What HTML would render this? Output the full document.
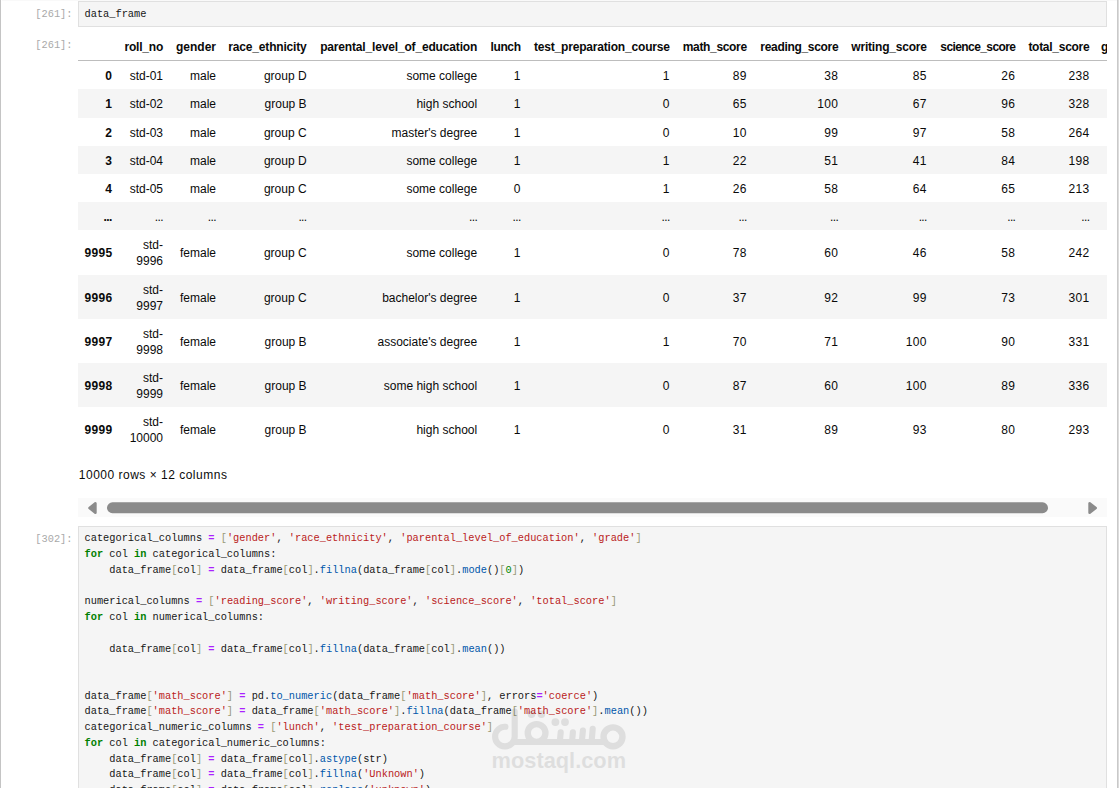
<!DOCTYPE html>
<html><head><meta charset="utf-8"><title>notebook</title>
<style>
html,body{margin:0;padding:0;background:#fff;}
body{width:1119px;height:788px;overflow:hidden;position:relative;font-family:"Liberation Sans",sans-serif;}
.edge-l{position:absolute;left:0;top:0;width:1px;height:788px;background:#c4c4c4;}
.edge-r{position:absolute;left:1117px;top:0;width:2px;height:788px;background:linear-gradient(to right,#c9c9c9 0,#c9c9c9 50%,#dcdcdc 50%,#dcdcdc 100%);}
.edge-t{position:absolute;left:2px;top:0;width:1115px;height:1px;background:#f9f9f9;}
.prompt{position:absolute;left:20px;width:52.5px;text-align:right;font-family:"Liberation Mono",monospace;font-size:10.32px;line-height:15.73px;color:#a9a9a9;white-space:pre;}
.inbox{position:absolute;left:78px;width:1029px;box-sizing:border-box;border:1px solid #e0e0e0;background:#f5f5f5;overflow:hidden;}
.code{position:absolute;left:5.5px;margin:0;font-family:"Liberation Mono",monospace;font-size:10.32px;line-height:15.73px;color:#161616;white-space:pre;}
.code b{font-weight:bold;}
.k{color:#008000;}
.o{color:#aa22ff;}
.s{color:#ba2121;}
.p{color:#0055aa;}
.b{color:#999977;}
.m{color:#008800;}
.out{position:absolute;left:78px;top:32px;width:1029px;height:430px;overflow:hidden;}
table.df{border-collapse:separate;border-spacing:0;table-layout:fixed;width:1078px;font-size:12px;color:#0a0a0a;}
table.df th,table.df td{padding:7.9px 6.5px 4.2px 6.5px;line-height:15.9px;text-align:right;vertical-align:middle;white-space:nowrap;overflow:visible;}
table.df th{font-weight:bold;}
table.df thead th{padding-top:7.9px;padding-bottom:4.2px;border-bottom:1px solid #bdbdbd;}
table.df tbody tr:nth-child(even) td,table.df tbody tr:nth-child(even) th{background:#f5f5f5;}
table.df tbody tr:nth-child(2) td,table.df tbody tr:nth-child(2) th{padding-bottom:5.2px;}
table.df tbody tr.t td,table.df tbody tr.t th{padding-top:8.4px;padding-bottom:3.8px;}
table.df tbody tr:nth-child(7) td,table.df tbody tr:nth-child(7) th{padding-top:7.9px;padding-bottom:5.3px;}
table.df td.n{letter-spacing:0.33px;}
.summary{position:absolute;left:78.8px;top:467px;font-size:12px;line-height:16px;letter-spacing:0.5px;color:#0a0a0a;white-space:nowrap;}
.sb{position:absolute;left:78px;top:498px;width:1029px;height:19px;background:#fafafa;}
.thumb{position:absolute;left:29px;top:3.9px;width:941px;height:11px;border-radius:5.5px;background:#8b8b8b;}
.al{position:absolute;left:10px;top:3.5px;width:0;height:0;border-top:6px solid transparent;border-bottom:6px solid transparent;border-right:9px solid #8b8b8b;}
.ar{position:absolute;left:1010px;top:3.5px;width:0;height:0;border-top:6px solid transparent;border-bottom:6px solid transparent;border-left:9px solid #8b8b8b;}

table.df thead th:last-child{text-align:left;}
.wmtext{position:absolute;left:412.6px;top:221.6px;font-family:"Liberation Sans",sans-serif;font-weight:bold;font-size:21.8px;line-height:24px;color:#000;opacity:0.092;white-space:nowrap;}

table.df tbody th{letter-spacing:0.3px;padding-right:6.9px;}

table.df thead th span{display:inline-block;margin-left:-30px;}
table.df thead th:last-child span{margin-left:-1.5px;}
table.df td.d{letter-spacing:-0.6px;}
table.df tbody tr:nth-child(6) th{letter-spacing:-0.6px;padding-right:7.4px;}

</style></head>
<body>
<div class="edge-l"></div><div class="edge-r"></div><div class="edge-t"></div>
<div class="prompt" style="top:6.8px">[261]:</div>
<div class="inbox" style="top:1px;height:26px"><pre class="code" style="top:4.7px">data_frame</pre></div>
<div class="prompt" style="top:37.9px">[261]:</div>
<div class="out"><table class="df"><colgroup><col style="width:41px"><col style="width:50.5px"><col style="width:53px"><col style="width:90.5px"><col style="width:170.5px"><col style="width:43.5px"><col style="width:149px"><col style="width:77px"><col style="width:91.5px"><col style="width:88.5px"><col style="width:88.5px"><col style="width:74px"><col style="width:60px"></colgroup><thead><tr><th style="letter-spacing:0px"><span></span></th><th style="letter-spacing:-0.215px"><span>roll_no</span></th><th style="letter-spacing:0px"><span>gender</span></th><th style="letter-spacing:-0.176px"><span>race_ethnicity</span></th><th style="letter-spacing:-0.163px"><span>parental_level_of_education</span></th><th style="letter-spacing:-0.35px"><span>lunch</span></th><th style="letter-spacing:-0.187px"><span>test_preparation_course</span></th><th style="letter-spacing:-0.337px"><span>math_score</span></th><th style="letter-spacing:-0.311px"><span>reading_score</span></th><th style="letter-spacing:-0.194px"><span>writing_score</span></th><th style="letter-spacing:-0.595px"><span>science_score</span></th><th style="letter-spacing:-0.275px"><span>total_score</span></th><th style="letter-spacing:-0.1px"><span>grade</span></th></tr></thead><tbody><tr class=""><th>0</th><td class="r">std-01</td><td class="">male</td><td class="">group D</td><td class="">some college</td><td class="n">1</td><td class="n">1</td><td class="n">89</td><td class="n">38</td><td class="n">85</td><td class="n">26</td><td class="n">238</td><td></td></tr><tr class=""><th>1</th><td class="r">std-02</td><td class="">male</td><td class="">group B</td><td class="">high school</td><td class="n">1</td><td class="n">0</td><td class="n">65</td><td class="n">100</td><td class="n">67</td><td class="n">96</td><td class="n">328</td><td></td></tr><tr class=""><th>2</th><td class="r">std-03</td><td class="">male</td><td class="">group C</td><td class="">master's degree</td><td class="n">1</td><td class="n">0</td><td class="n">10</td><td class="n">99</td><td class="n">97</td><td class="n">58</td><td class="n">264</td><td></td></tr><tr class=""><th>3</th><td class="r">std-04</td><td class="">male</td><td class="">group D</td><td class="">some college</td><td class="n">1</td><td class="n">1</td><td class="n">22</td><td class="n">51</td><td class="n">41</td><td class="n">84</td><td class="n">198</td><td></td></tr><tr class=""><th>4</th><td class="r">std-05</td><td class="">male</td><td class="">group C</td><td class="">some college</td><td class="n">0</td><td class="n">1</td><td class="n">26</td><td class="n">58</td><td class="n">64</td><td class="n">65</td><td class="n">213</td><td></td></tr><tr class=""><th>...</th><td class="d">...</td><td class="d">...</td><td class="d">...</td><td class="d">...</td><td class="d">...</td><td class="d">...</td><td class="d">...</td><td class="d">...</td><td class="d">...</td><td class="d">...</td><td class="d">...</td><td></td></tr><tr class="t"><th>9995</th><td class="r">std-<br>9996</td><td class="">female</td><td class="">group C</td><td class="">some college</td><td class="n">1</td><td class="n">0</td><td class="n">78</td><td class="n">60</td><td class="n">46</td><td class="n">58</td><td class="n">242</td><td></td></tr><tr class="t"><th>9996</th><td class="r">std-<br>9997</td><td class="">female</td><td class="">group C</td><td class="">bachelor's degree</td><td class="n">1</td><td class="n">0</td><td class="n">37</td><td class="n">92</td><td class="n">99</td><td class="n">73</td><td class="n">301</td><td></td></tr><tr class="t"><th>9997</th><td class="r">std-<br>9998</td><td class="">female</td><td class="">group B</td><td class="">associate's degree</td><td class="n">1</td><td class="n">1</td><td class="n">70</td><td class="n">71</td><td class="n">100</td><td class="n">90</td><td class="n">331</td><td></td></tr><tr class="t"><th>9998</th><td class="r">std-<br>9999</td><td class="">female</td><td class="">group B</td><td class="">some high school</td><td class="n">1</td><td class="n">0</td><td class="n">87</td><td class="n">60</td><td class="n">100</td><td class="n">89</td><td class="n">336</td><td></td></tr><tr class="t"><th>9999</th><td class="r">std-<br>10000</td><td class="">female</td><td class="">group B</td><td class="">high school</td><td class="n">1</td><td class="n">0</td><td class="n">31</td><td class="n">89</td><td class="n">93</td><td class="n">80</td><td class="n">293</td><td></td></tr></tbody></table></div>
<div class="summary">10000 rows × 12 columns</div>
<div class="sb"><svg style="position:absolute;left:0;top:0" width="1029" height="19" viewBox="78 498 1029 19"><g fill="#8b8b8b" stroke="#8b8b8b" stroke-width="2.6" stroke-linejoin="round"><path d="M89.5 508 L95.4 503.3 V512.7 Z"/><path d="M1095.7 508 L1089.6 503.3 V512.7 Z"/></g><rect x="107" y="502.3" width="941" height="10.9" rx="5.45" fill="#8b8b8b"/></svg></div>
<div class="prompt" style="top:531.6px">[302]:</div>
<div class="inbox" style="top:526px;height:300px"><pre class="code" style="top:4.4px">categorical_columns <b class="o">=</b> <span class="b">[</span><span class="s">'gender'</span>, <span class="s">'race_ethnicity'</span>, <span class="s">'parental_level_of_education'</span>, <span class="s">'grade'</span><span class="b">]</span>
<b class="k">for</b> col <b class="k">in</b> categorical_columns:
    data_frame<span class="b">[</span>col<span class="b">]</span> <b class="o">=</b> data_frame<span class="b">[</span>col<span class="b">]</span>.<span class="p">fillna</span>(data_frame<span class="b">[</span>col<span class="b">]</span>.<span class="p">mode</span>()<span class="b">[</span><span class="m">0</span><span class="b">]</span>)

numerical_columns <b class="o">=</b> <span class="b">[</span><span class="s">'reading_score'</span>, <span class="s">'writing_score'</span>, <span class="s">'science_score'</span>, <span class="s">'total_score'</span><span class="b">]</span>
<b class="k">for</b> col <b class="k">in</b> numerical_columns:

    data_frame<span class="b">[</span>col<span class="b">]</span> <b class="o">=</b> data_frame<span class="b">[</span>col<span class="b">]</span>.<span class="p">fillna</span>(data_frame<span class="b">[</span>col<span class="b">]</span>.<span class="p">mean</span>())


data_frame<span class="b">[</span><span class="s">'math_score'</span><span class="b">]</span> <b class="o">=</b> pd.<span class="p">to_numeric</span>(data_frame<span class="b">[</span><span class="s">'math_score'</span><span class="b">]</span>, errors<b class="o">=</b><span class="s">'coerce'</span>)
data_frame<span class="b">[</span><span class="s">'math_score'</span><span class="b">]</span> <b class="o">=</b> data_frame<span class="b">[</span><span class="s">'math_score'</span><span class="b">]</span>.<span class="p">fillna</span>(data_frame<span class="b">[</span><span class="s">'math_score'</span><span class="b">]</span>.<span class="p">mean</span>())
categorical_numeric_columns <b class="o">=</b> <span class="b">[</span><span class="s">'lunch'</span>, <span class="s">'test_preparation_course'</span><span class="b">]</span>
<b class="k">for</b> col <b class="k">in</b> categorical_numeric_columns:
    data_frame<span class="b">[</span>col<span class="b">]</span> <b class="o">=</b> data_frame<span class="b">[</span>col<span class="b">]</span>.<span class="p">astype</span>(str)
    data_frame<span class="b">[</span>col<span class="b">]</span> <b class="o">=</b> data_frame<span class="b">[</span>col<span class="b">]</span>.<span class="p">fillna</span>(<span class="s">'Unknown'</span>)
    data_frame<span class="b">[</span>col<span class="b">]</span> <b class="o">=</b> data_frame<span class="b">[</span>col<span class="b">]</span>.<span class="p">replace</span>(<span class="s">'unknown'</span>)</pre>
<svg class="wm" style="position:absolute;left:406px;top:173px;opacity:0.092" width="150" height="56" viewBox="485 700 150 56">
<g fill="none" stroke="#000" stroke-width="6.1" stroke-linecap="round" stroke-linejoin="round">
<path d="M514.7 711.5 V736.5 A9.8 9.8 0 1 1 505.4 726.8 M514.7 742 H604"/>
<circle cx="536.6" cy="733" r="8.85" stroke-width="6.3"/>
<path d="M559.8 742 L560.7 732.4 M572 742 L572.9 732.4 M581.8 742 L582.9 730.6 M591.6 742 L592.7 728.8"/>
<circle cx="613" cy="736.8" r="9.45" stroke-width="6.4"/>
</g>
<g fill="#000"><circle cx="531.5" cy="714.2" r="3.75"/><circle cx="541.4" cy="714.2" r="3.75"/><circle cx="555.4" cy="722.1" r="3.9"/><circle cx="565" cy="722.1" r="3.9"/></g>
</svg>
<div class="wmtext">mostaql.com</div>

</div>
</body></html>
